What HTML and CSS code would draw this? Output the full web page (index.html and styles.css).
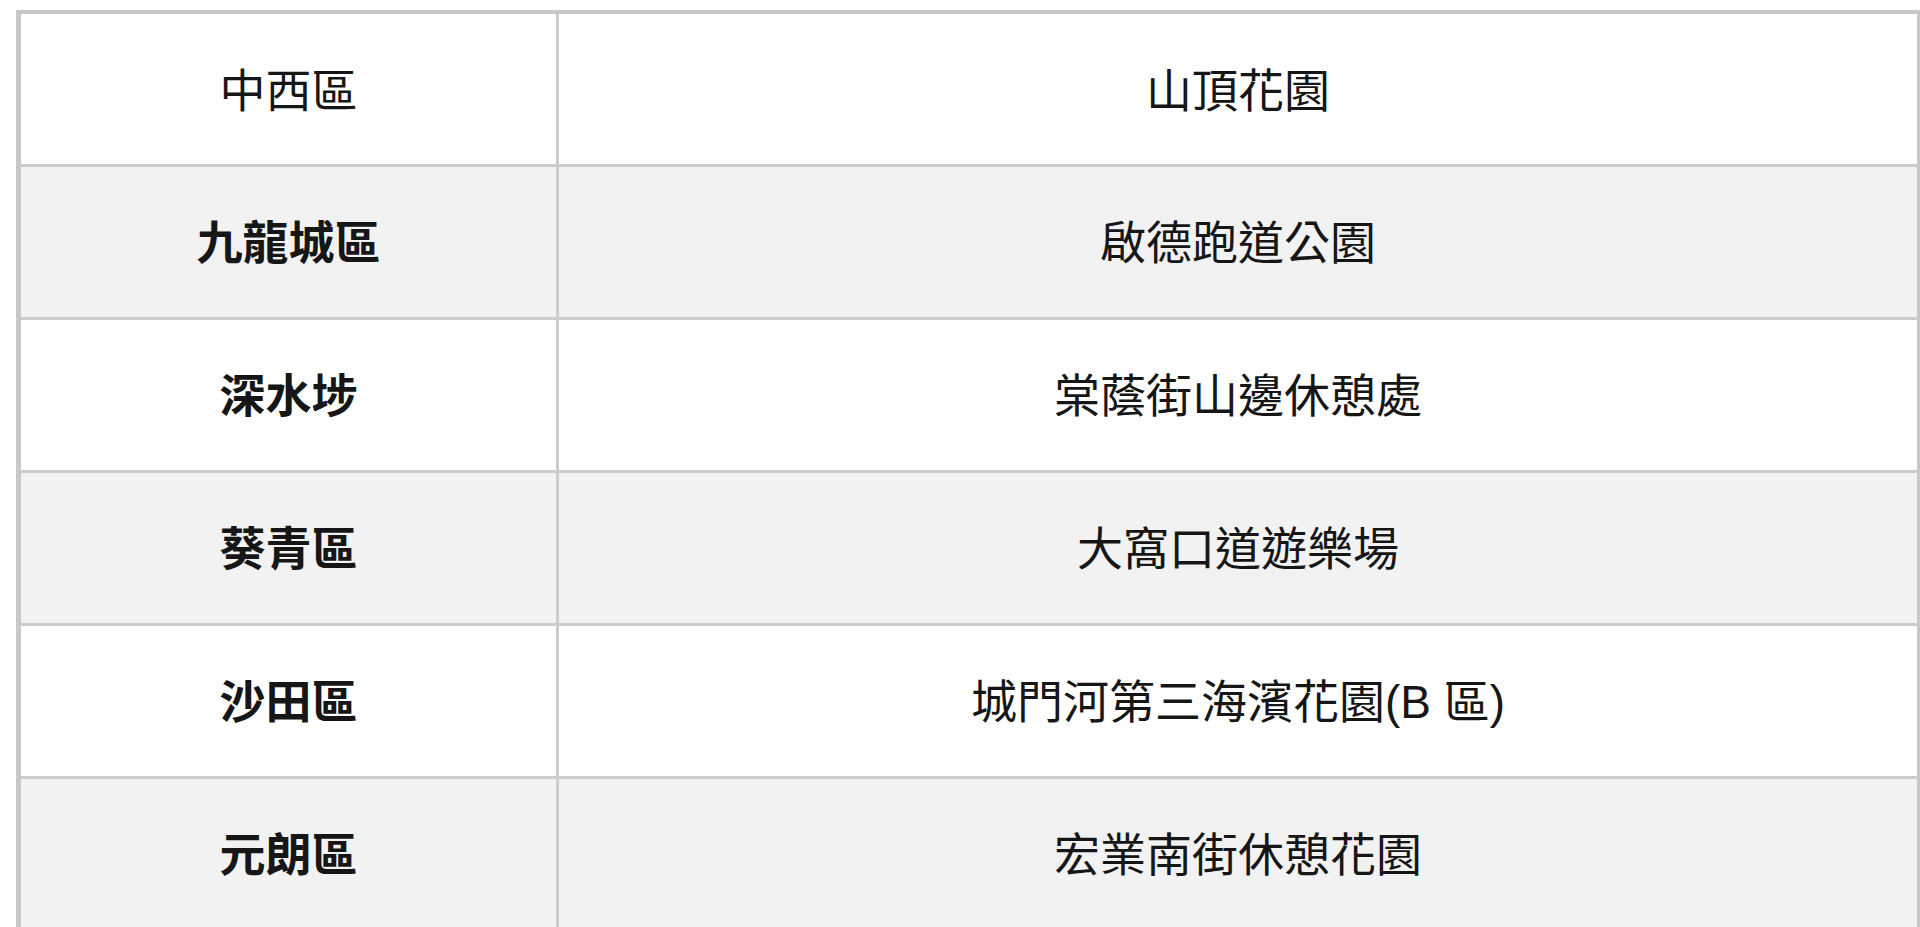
FILE: index.html
```html
<!DOCTYPE html>
<html lang="zh-Hant">
<head>
<meta charset="utf-8">
<title>地區公園</title>
<link rel="stylesheet" href="styles.css">
</head>
<body>
<table class="parks">
  <colgroup>
    <col class="col-district">
    <col class="col-park">
  </colgroup>
  <tbody>
    <tr class="row-odd"><td class="district plain">中西區</td><td class="park">山頂花園</td></tr>
    <tr class="row-even"><td class="district">九龍城區</td><td class="park">啟德跑道公園</td></tr>
    <tr class="row-odd"><td class="district">深水埗</td><td class="park">棠蔭街山邊休憩處</td></tr>
    <tr class="row-even"><td class="district">葵青區</td><td class="park">大窩口道遊樂場</td></tr>
    <tr class="row-odd"><td class="district">沙田區</td><td class="park">城門河第三海濱花園(B 區)</td></tr>
    <tr class="row-even"><td class="district">元朗區</td><td class="park">宏業南街休憩花園</td></tr>
  </tbody>
</table>
</body>
</html>
```

FILE: styles.css
```css
html, body {
  margin: 0;
  padding: 0;
  background: #ffffff;
  overflow: hidden;
}

body {
  padding: 10px 0 0 16px;
  font-family: "Liberation Sans", "Noto Sans CJK TC", sans-serif;
  color: #161616;
}

.parks {
  border-collapse: collapse;
  width: 1901px;
  table-layout: fixed;
  border-top: 4px solid #c8c8c8;
  border-left: 5px solid #c8c8c8;
  border-right: 5px solid #c8c8c8;
}

.col-district { width: 539px; }
.col-park { width: 1362px; }

.parks tr { height: 153px; }

.parks td {
  border: 3px solid #cccccc;
  text-align: center;
  vertical-align: middle;
  font-size: 46px;
  line-height: 1.2;
  padding: 5px 0 0 0;
}

.row-odd td { background: #ffffff; }
.row-even td { background: #f2f2f2; }

.district { font-weight: bold; }
.district.plain { font-weight: normal; }
.park { font-weight: normal; }
```
